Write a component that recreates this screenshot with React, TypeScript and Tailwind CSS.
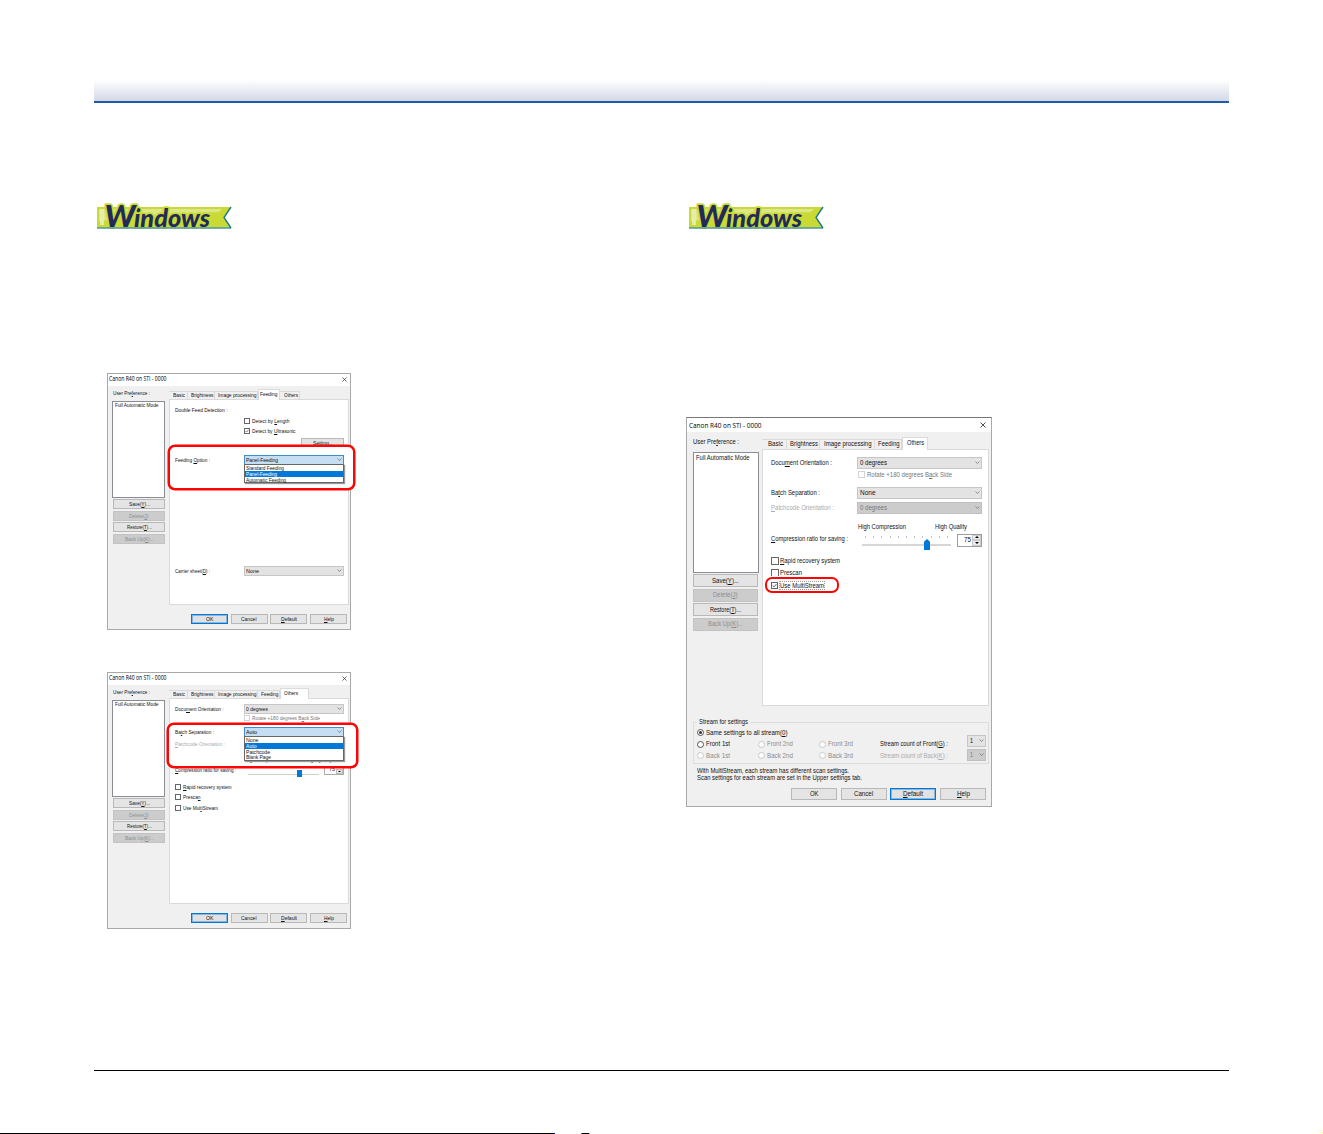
import { useLayoutEffect, useRef } from 'react';
import type { ReactNode } from 'react';
import clsx from 'clsx';

interface LabelProps {
  text: string;
  w: number;
  className?: string;
}

// "&" marks the letter that is underlined as the access key
function Label({ text, w, className }: LabelProps) {
  const ref = useRef<HTMLSpanElement>(null);
  const [before, after] = text.split('&');

  // Condense the text to the width of the dialog font
  useLayoutEffect(() => {
    const el = ref.current;
    if (!el) return;
    el.style.transform = 'none';
    el.style.transform = `scaleX(${w / el.getBoundingClientRect().width})`;
  }, [w, text]);

  return (
    <span className={clsx('block shrink-0 leading-none', className)} style={{ width: w }}>
      <span ref={ref} className="inline-block origin-left whitespace-nowrap">
        {before}
        {after !== undefined && (
          <>
            <span className="underline decoration-[0.6px] underline-offset-1">{after[0]}</span>
            {after.slice(1)}
          </>
        )}
      </span>
    </span>
  );
}

interface ButtonProps {
  text: string;
  w: number;
  className: string;
  disabled?: boolean;
  primary?: boolean;
}

function DialogButton({ text, w, className, disabled, primary }: ButtonProps) {
  return (
    <button
      className={clsx(
        'flex shrink-0 items-center justify-center border',
        disabled && 'border-[#c2c2c2] bg-[#cccccc] text-[#8c8c8c]',
        primary && 'border-[#0078d7] bg-[#e1e1e1] ring-1 ring-inset ring-[#0078d7]/40',
        !disabled && !primary && 'border-[#b8b8b8] bg-[#e4e4e4]',
        className
      )}
    >
      <Label text={text} w={w} />
    </button>
  );
}

function Chevron({ className }: { className?: string }) {
  return (
    <svg viewBox="0 0 6 4" className={clsx('ml-auto shrink-0', className)} fill="none" stroke="#666" strokeWidth="0.8">
      <path d="M0.6 0.6 3 3 5.4 0.6" />
    </svg>
  );
}

interface SelectProps {
  text: string;
  w: number;
  className: string;
  chevron?: string;
  open?: boolean;
  disabled?: boolean;
  children?: ReactNode;
}

function Select({ text, w, className, chevron = 'mr-[1.5px] w-[5px]', open, disabled, children }: SelectProps) {
  return (
    <div
      className={clsx(
        'relative flex shrink-0 items-center border',
        open && 'border-[#3c8fce] bg-[#c5def2]',
        disabled && 'border-[#bfbfbf] bg-[#cccccc] text-[#777]',
        !open && !disabled && 'border-[#c6c6c6] bg-[#e3e3e3]',
        className
      )}
    >
      <Label text={text} w={w} />
      <Chevron className={chevron} />
      {children}
    </div>
  );
}

function DropList({ items, selected }: { items: [string, number][]; selected: number }) {
  return (
    <div className="absolute -left-px top-full z-10 w-[100px] border border-[#666] bg-white shadow-[1px_1px_1px_#999]">
      {items.map(([text, w], i) => (
        <div key={text} className={clsx('flex h-[5.8px] items-center pl-px', i === selected && 'bg-[#0078d7] text-white')}>
          <Label text={text} w={w} />
        </div>
      ))}
    </div>
  );
}

interface CheckProps {
  text: string;
  w: number;
  box: string;
  className: string;
  checked?: boolean;
  disabled?: boolean;
  focused?: boolean;
}

function Check({ text, w, box, className, checked, disabled, focused }: CheckProps) {
  return (
    <div className={clsx('flex shrink-0 items-center', disabled && 'text-[#777]', className)}>
      <span className={clsx('block shrink-0 border bg-white', disabled ? 'border-[#d4d4d4]' : 'border-[#666]', box)}>
        {checked && (
          <svg viewBox="0 0 6 6" className="block size-full" fill="none" stroke="#333" strokeWidth="0.9">
            <path d="M0.8 3 2.4 4.6 5.4 1.2" />
          </svg>
        )}
      </span>
      <Label text={text} w={w} className={focused ? 'outline-1 outline-dotted outline-[#999]' : undefined} />
    </div>
  );
}

function Radio({ text, w, checked, disabled }: { text: string; w: number; checked?: boolean; disabled?: boolean }) {
  return (
    <div className={clsx('flex items-center gap-[2px]', disabled && 'text-[#8c8c8c]')}>
      <span
        className={clsx(
          'flex size-[7px] shrink-0 items-center justify-center rounded-full border bg-white',
          disabled ? 'border-[#c8c8c8]' : 'border-[#555]'
        )}
      >
        {checked && <span className="size-[3.5px] rounded-full bg-[#333]" />}
      </span>
      <Label text={text} w={w} />
    </div>
  );
}

function TitleBar({ w, className, close }: { w: number; className: string; close: string }) {
  return (
    <div className={clsx('flex shrink-0 items-center justify-between bg-white font-["Open_Sans",sans-serif] text-black', className)}>
      <Label text="Canon R40 on STI - 0000" w={w} />
      <svg viewBox="0 0 6 6" className={close} fill="none" stroke="#222" strokeWidth="0.8">
        <path d="M0.5 0.5 5.5 5.5M5.5 0.5 0.5 5.5" />
      </svg>
    </div>
  );
}

interface Tab {
  text: string;
  w: number;
  className: string;
}

function Tabs({ tabs, selected, className, height, selectedHeight }: {
  tabs: Tab[];
  selected: string;
  className: string;
  height: string;
  selectedHeight: string;
}) {
  return (
    <div className={clsx('flex shrink-0 items-end', className)}>
      {tabs.map((tab) => {
        const active = tab.text === selected;
        return (
          <div
            key={tab.text}
            className={clsx(
              'flex shrink-0 items-center justify-center border border-b-0 border-[#dadada]',
              active ? 'relative z-10 -mb-px bg-white pb-[2px]' : 'border-l-0 bg-[#f0f0f0] pb-px pl-[2px]',
              active ? selectedHeight : height,
              tab.className
            )}
          >
            <Label text={tab.text} w={tab.w} />
          </div>
        );
      })}
    </div>
  );
}

function SmallDialog({ tab, children }: { tab: string; children: ReactNode }) {
  const tabs: Tab[] = [
    { text: 'Basic', w: 12, className: 'w-[19px]' },
    { text: 'Brightness', w: 22.5, className: 'w-[27px]' },
    { text: 'Image processing', w: 38.5, className: 'w-[43px]' },
    { text: 'Feeding', w: 17.5, className: 'w-[22px]' },
    { text: 'Others', w: 14, className: tab === 'Others' ? 'w-[29px] !justify-start pl-[3px]' : 'w-[20px]' },
  ];

  return (
    <section className='flex h-[257px] w-[244px] flex-col border border-[#a9a9a9] bg-[#f0f0f0] font-["Liberation_Sans",sans-serif] text-[6px] text-[#111]'>
      <TitleBar w={57.5} className="h-[12px] pb-px pl-px pr-[3px] text-[6.5px]" close="w-[5px]" />
      <div className="flex">
        <div className="flex w-[61px] shrink-0 flex-col pl-[4px]">
          <div className="flex h-[14px] items-center pl-px">
            <Label text="User Pre&ference :" w={37} />
          </div>
          <div className="mt-px h-[97px] w-[53px] border border-[#8a8d94] bg-white pl-[2px]">
            <Label text="Full Automatic Mode" w={43.5} />
          </div>
          <div className="mt-px flex flex-col gap-[1.6px] pl-px">
            <DialogButton text="Save(&Y)..." w={21} className="h-[10px] w-[52px]" />
            <DialogButton text="Delete(&J)" w={19.5} className="h-[10px] w-[52px]" disabled />
            <DialogButton text="Restore(&T)..." w={25} className="h-[10px] w-[52px]" />
            <DialogButton text="Back Up(&K)..." w={29} className="h-[10px] w-[52px]" disabled />
          </div>
        </div>
        <div className="flex w-[180px] shrink-0 flex-col">
          <Tabs tabs={tabs} selected={tab} className="h-[13px]" height="h-[8px]" selectedHeight="h-[11px]" />
          <div className="flex h-[206px] flex-col border border-[#dadada] bg-white">{children}</div>
        </div>
      </div>
      <div className="mb-[5px] mr-[3px] mt-auto flex justify-end gap-[2.7px]">
        <DialogButton text="OK" w={7.5} className="h-[10px] w-[37px]" primary />
        <DialogButton text="Cancel" w={15.5} className="h-[10px] w-[37px]" />
        <DialogButton text="&Default" w={16} className="h-[10px] w-[37px]" />
        <DialogButton text="&Help" w={10} className="h-[10px] w-[37px]" />
      </div>
    </section>
  );
}

function SmallRow({ text, w, className, disabled, children }: LabelProps & { disabled?: boolean; children?: ReactNode }) {
  return (
    <div className={clsx('flex h-[10px] shrink-0 items-center', className)}>
      <div className={clsx('w-[69px] shrink-0', disabled && 'text-[#aaa]')}>
        <Label text={text} w={w} />
      </div>
      {children}
    </div>
  );
}

function FeedingDialog() {
  return (
    <SmallDialog tab="Feeding">
      <SmallRow text="Double Feed Detection :" w={52.5} className="mt-[5px] pl-[5px]" />
      <Check text="Detect by &Length" w={37.5} box="size-[6px] mr-[2px]" className="ml-[74px] mt-px h-[10px]" />
      <Check text="Detect by &Ultrasonic" w={43.5} box="size-[6px] mr-[2px]" className="ml-[74px] h-[10px]" checked />
      <div className="ml-auto mr-[4px] mt-[2px] flex h-[8px] w-[43px] shrink-0 justify-center overflow-hidden border border-b-0 border-[#b8b8b8] bg-[#e4e4e4] pt-px">
        <Label text="Setting..." w={20} />
      </div>
      <div className="relative z-10 -ml-[2px] -mt-px h-[45px] w-[187px] shrink-0 rounded-[7px] border-2 border-[#fb0505] bg-white pl-[5px] pt-[8px] shadow-[0_0_0_0.5px_#fb0505]">
        <SmallRow text="Feeding &Option :" w={35}>
          <Select text="Panel-Feeding" w={32} className="h-[10px] w-[100px] pl-px" open>
            <DropList items={[['Standard Feeding', 38], ['Panel-Feeding', 31], ['Automatic Feeding', 40]]} selected={1} />
          </Select>
        </SmallRow>
      </div>
      <SmallRow text="Carrier sheet(&D) :" w={35} className="mt-[76px] pl-[5px]">
        <Select text="None" w={13} className="h-[10px] w-[100px] pl-px" />
      </SmallRow>
    </SmallDialog>
  );
}

function BatchDialog() {
  return (
    <SmallDialog tab="Others">
      <SmallRow text="Docu&ment Orientation :" w={48.5} className="mt-[5px] pl-[5px]">
        <Select text="0 degrees" w={22} className="h-[10px] w-[100px] pl-px" />
      </SmallRow>
      <Check text="Rotate +180 degrees B&ack Side" w={68} box="size-[6px] mr-[2px]" className="ml-[74px] h-[8px]" disabled />
      <div className="relative z-10 -ml-[3px] mt-px h-[45px] w-[191px] shrink-0 rounded-[7px] border-2 border-[#fb0505] bg-white pl-[6px] pt-[2px] shadow-[0_0_0_0.5px_#fb0505]">
        <SmallRow text="Ba&tch Separation :" w={39}>
          <Select text="Auto" w={11} className="h-[10px] w-[100px] pl-px" open>
            <DropList items={[['None', 12.5], ['Auto', 10.5], ['Patchcode', 24], ['Blank Page', 25]]} selected={1} />
          </Select>
        </SmallRow>
        <SmallRow text="&Patchcode Orientation :" w={50} className="mt-[2px]" disabled />
        <div className="ml-[70px] mt-[6px] flex h-[10px] items-center gap-[22px]">
          <Label text="High Compression" w={39} />
          <Label text="High Quality" w={26} />
        </div>
      </div>
      <SmallRow text="&Compression ratio for saving :" w={61} className="-mt-[3px] pl-[5px]">
        <div className="relative ml-[4px] mt-[8px] h-px w-[71px] bg-[#cfcfcf]">
          <span className="absolute -top-[4px] left-[49px] h-[7.5px] w-[5px] bg-[#0078d7]" />
        </div>
        <div className="ml-[5px] flex h-[10px] w-[20px] justify-between border border-[#aaa] bg-white pl-[4px]">
          <Label text="75" w={6} />
          <span className="flex h-[5px] w-[7px] items-center justify-center self-end border border-[#bbb] bg-[#e8e8e8]">
            <svg viewBox="0 0 4 2" className="w-[3px]"><path d="M0 0H4L2 2Z" /></svg>
          </span>
        </div>
      </SmallRow>
      <Check text="&Rapid recovery system" w={48.5} box="size-[6px] mr-[1.5px]" className="ml-[5px] mt-[7px] h-[10.3px]" />
      <Check text="Presca&n" w={17.5} box="size-[6px] mr-[1.5px]" className="ml-[5px] h-[10.3px]" />
      <Check text="Use Mul&tiStream" w={35} box="size-[6px] mr-[1.5px]" className="ml-[5px] h-[10.3px]" />
    </SmallDialog>
  );
}

function LargeRow({ text, w, className, disabled, children }: LabelProps & { disabled?: boolean; children?: ReactNode }) {
  return (
    <div className={clsx('flex shrink-0 items-center pl-[8px]', className)}>
      <div className={clsx('w-[86px] shrink-0', disabled && 'text-[#aaa]')}>
        <Label text={text} w={w} />
      </div>
      {children}
    </div>
  );
}

function MultiStreamDialog() {
  const tabs: Tab[] = [
    { text: 'Basic', w: 15, className: 'w-[25px]' },
    { text: 'Brightness', w: 28, className: 'w-[33px]' },
    { text: 'Image processing', w: 47.5, className: 'w-[55px]' },
    { text: 'Feeding', w: 21.5, className: 'w-[27px]' },
    { text: 'Others', w: 17, className: 'w-[26px] !justify-start pl-[4px]' },
  ];

  return (
    <section className='flex h-[390px] w-[306px] flex-col border border-[#a9a9a9] border-t-[#777] bg-[#f0f0f0] font-["Liberation_Sans",sans-serif] text-[7.4px] text-[#111]'>
      <TitleBar w={72.5} className="h-[14px] pl-[1.5px] pr-[5px] text-[8px]" close="w-[6px]" />
      <div className="flex">
        <div className="flex w-[75px] shrink-0 flex-col pl-[6px]">
          <div className="flex h-[20px] items-center">
            <Label text="User Pre&ference :" w={46} />
          </div>
          <div className="h-[121px] w-[66px] border border-[#8a8d94] bg-white pl-[2px] pt-px">
            <Label text="Full Automatic Mode" w={53.5} />
          </div>
          <div className="mt-px flex flex-col gap-[1.5px]">
            <DialogButton text="Save(&Y)..." w={27} className="h-[13px] w-[65px]" />
            <DialogButton text="Delete(&J)" w={24.5} className="h-[13px] w-[65px]" disabled />
            <DialogButton text="Restore(&T)..." w={31} className="h-[13px] w-[65px]" />
            <DialogButton text="Back Up(&K)..." w={35} className="h-[13px] w-[65px]" disabled />
          </div>
        </div>
        <div className="flex w-[227px] shrink-0 flex-col">
          <Tabs tabs={tabs} selected="Others" className="h-[17px]" height="h-[10px]" selectedHeight="h-[13px]" />
          <div className="flex h-[257px] flex-col border border-[#dadada] bg-white">
            <LargeRow text="Docu&ment Orientation :" w={61} className="mt-[7px] h-[11px]">
              <Select text="0 degrees" w={27} className="h-[12px] w-[125px] pl-[2px]" />
            </LargeRow>
            <Check text="Rotate +180 degrees B&ack Side" w={85} box="size-[7px] mr-[2px]" className="ml-[95px] h-[13px]" disabled />
            <LargeRow text="Ba&tch Separation :" w={49} className="mt-[6px] h-[11px]">
              <Select text="None" w={15.5} className="h-[12px] w-[125px] pl-[2px]" />
            </LargeRow>
            <LargeRow text="&Patchcode Orientation :" w={63} className="mt-[4px] h-[11px]" disabled>
              <Select text="0 degrees" w={27} className="h-[12px] w-[125px] pl-[2px]" disabled />
            </LargeRow>
            <div className="ml-[95px] mt-[8px] flex h-[11px] shrink-0 items-center gap-[29px]">
              <Label text="High Compression" w={48} />
              <Label text="High Quality" w={32} />
            </div>
            <LargeRow text="&Compression ratio for saving :" w={77} className="h-[14px]">
              <div className="ml-[5px] flex h-full w-[89px] shrink-0 flex-col pt-[4px]">
                <div className="flex justify-between px-[3px]">
                  {Array.from({ length: 11 }, (_, i) => (
                    <span key={i} className="h-[2px] w-px bg-[#c4c4c4]" />
                  ))}
                </div>
                <div className="relative mt-[6px] h-[2px] shrink-0 border border-[#d6d6d6] bg-[#e7eaea]">
                  <span className="absolute -top-[6px] left-[61px] h-[11px] w-[6px] bg-[#0078d7] [clip-path:polygon(50%_0,100%_25%,100%_100%,0_100%,0_25%)]" />
                </div>
              </div>
              <div className="ml-[6px] mt-[2px] flex h-[13px] w-[25px] items-center justify-end border border-[#9a9da4] bg-white">
                <Label text="75" w={7} />
                <div className="ml-px flex h-full w-[9px] flex-col">
                  {['M0 2H4L2 0Z', 'M0 0H4L2 2Z'].map((d) => (
                    <span key={d} className="flex flex-1 items-center justify-center border border-[#ccc] bg-[#ececec]">
                      <svg viewBox="0 0 4 2" className="w-[4px]"><path d={d} /></svg>
                    </span>
                  ))}
                </div>
              </div>
            </LargeRow>
            <Check text="&Rapid recovery system" w={60} box="size-[8px] mr-px" className="ml-[8px] mt-[8px] h-[13px]" />
            <Check text="Presca&n" w={22} box="size-[8px] mr-px" className="ml-[8px] h-[12px]" />
            <div className="relative z-10 -mt-[2px] ml-[2px] flex h-[16px] w-[74px] shrink-0 items-center rounded-[7px] border-2 border-[#fb0505] bg-white pl-[4px] pt-px ring-1 ring-white">
              <Check text="Use MultiStream" w={44} box="size-[7px] mr-[2px]" className="h-[8px]" checked focused />
            </div>
          </div>
        </div>
      </div>
      <div className="ml-[6px] mt-[16px] h-[42px] w-[296px] shrink-0 border border-[#dcdcdc]">
        <div className="-mt-[6px] ml-[3px] flex h-[10px] w-fit items-center bg-[#f0f0f0] px-[2px]">
          <Label text="Stream for settings" w={49} />
        </div>
        <div className="ml-[3px] flex h-[11px] items-center">
          <Radio text="Same settings to all stream(&0)" w={81.5} checked />
        </div>
        <div className="flex">
          <div className="ml-[3px] grid w-[183px] shrink-0 grid-cols-[61px_61px_61px] grid-rows-[12px_11px]">
            <Radio text="Front 1st" w={24} />
            <Radio text="Front 2nd" w={26} disabled />
            <Radio text="Front 3rd" w={25} disabled />
            <Radio text="Back 1st" w={24} disabled />
            <Radio text="Back 2nd" w={26} disabled />
            <Radio text="Back 3rd" w={25} disabled />
          </div>
          <div className="grid w-[87px] grid-rows-[12px_11px] items-center">
            <Label text="Stream count of Front(&G) :" w={68} />
            <Label text="Stream count of Back(&K) :" w={68} className="text-[#aaa]" />
          </div>
          <div className="-mt-[3px] flex flex-col gap-[2px]">
            <Select text="1" w={3} className="h-[12px] w-[19px] pl-[2px]" />
            <Select text="1" w={3} className="h-[12px] w-[19px] pl-[2px]" disabled />
          </div>
        </div>
      </div>
      <div className="ml-[10px] mt-[3px] flex shrink-0 flex-col">
        <Label text="With MultiStream, each stream has different scan settings." w={152} />
        <Label text="Scan settings for each stream are set in the Upper settings tab." w={165} />
      </div>
      <div className="mb-[6px] mr-[5px] mt-auto flex justify-end gap-[3.7px]">
        <DialogButton text="OK" w={8.5} className="h-[12px] w-[46px]" />
        <DialogButton text="Cancel" w={19} className="h-[12px] w-[46px]" />
        <DialogButton text="&Default" w={20} className="h-[12px] w-[46px]" primary />
        <DialogButton text="&Help" w={13} className="h-[12px] w-[46px]" />
      </div>
    </section>
  );
}

function WindowsBadge() {
  return (
    <svg viewBox="0 0 136 30" className="block h-[30px] w-[136px] overflow-visible">
      <path d="M0 6H134L127 16.5 134 27H0Z" fill="#c9da35" />
      <path d="M2 8H125L122 11 60 14 2 20Z" fill="#dde78a" />
      <path d="M3 8H7V24H3Z" fill="#e6edab" />
      <g
        fill="#222a5a"
        stroke="#c9da35"
        strokeWidth="3.5"
        strokeLinejoin="round"
        paintOrder="stroke"
        fontFamily="Lato, sans-serif"
        fontStyle="italic"
        fontWeight="900"
      >
        <text x="37" y="25.5" fontSize="24" textLength="76" lengthAdjust="spacingAndGlyphs">indows</text>
        <text x="7.5" y="25.5" fontSize="31" textLength="31" lengthAdjust="spacingAndGlyphs">W</text>
      </g>
      <path d="M0 27H134" stroke="#4a98a0" strokeWidth="1.4" />
      <path d="M134 6 127 16.5 134 27" fill="none" stroke="#1d7c8c" strokeWidth="1.4" />
    </svg>
  );
}

export default function App() {
  return (
    <div className="flex h-[1134px] w-[1323px] flex-col overflow-hidden bg-white">
      <header className="ml-[94px] mt-[80px] h-[23px] w-[1135px] shrink-0 border-b-2 border-[#1f5bab] bg-linear-to-b from-white to-[#d3d8e6]" />

      <main className="ml-[97px] flex h-[967px] shrink-0 pt-[98px]">
        <div className="w-[589px] shrink-0">
          <WindowsBadge />
          <div className="ml-[10px] mt-[142px] flex flex-col gap-[42px]">
            <FeedingDialog />
            <BatchDialog />
          </div>
        </div>
        <div>
          <div className="ml-[3px]">
            <WindowsBadge />
          </div>
          <div className="mt-[186px]">
            <MultiStreamDialog />
          </div>
        </div>
      </main>

      <footer className="flex flex-1 flex-col">
        <div className="ml-[94px] h-px w-[1135px] shrink-0 bg-black" />
        <div className="mt-auto flex h-[2px] items-end">
          <span className="h-px w-[554px] bg-black" />
          <span className="h-px w-px bg-[#0000ff]" />
          <span className="ml-[26px] h-px w-px bg-[#e04040]" />
          <span className="h-px w-[7px] bg-black" />
          <span className="h-px w-px bg-[#40e0e0]" />
          <span className="ml-auto h-px w-px self-start bg-[#ffff00]" />
        </div>
      </footer>
    </div>
  );
}
